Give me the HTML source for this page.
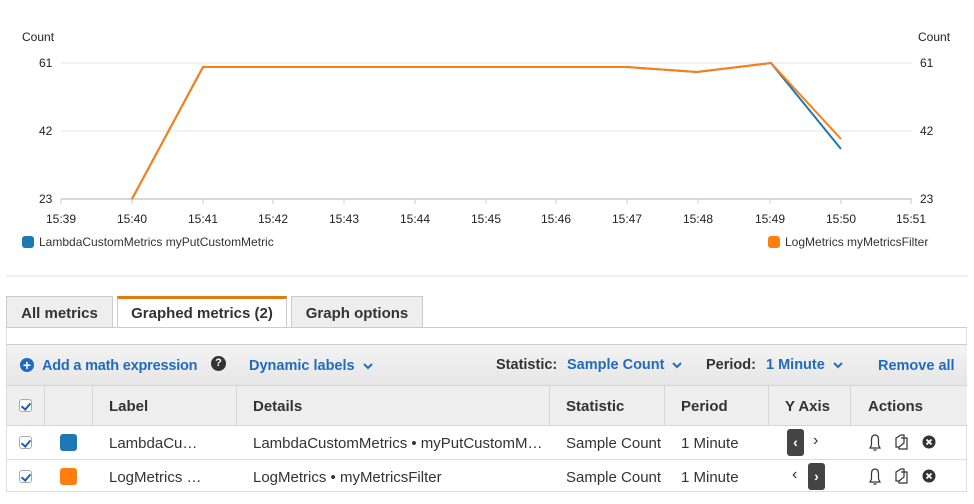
<!DOCTYPE html>
<html><head><style>
*{box-sizing:border-box;margin:0;padding:0}
body{width:974px;height:504px;background:#fff;font-family:"Liberation Sans",Arial,sans-serif;position:relative;overflow:hidden;color:#333}
.abs{position:absolute}
.tab{position:absolute;top:296px;height:31px;border:1px solid #ccc;border-bottom:none;background:#eee;font-weight:bold;font-size:15px;text-align:center;line-height:33px;color:#333}
.blue{color:#1f6bbf;font-weight:bold}
.cb{position:absolute;width:13px;height:13px;border:1px solid #aaa;border-radius:3px;background:#fff}
.cb:after{content:"";position:absolute;left:3px;top:1px;width:4px;height:7px;border:solid #1a5fb4;border-width:0 2px 2px 0;transform:rotate(40deg)}
.th{position:absolute;top:386px;height:40px;line-height:41px;font-weight:bold;font-size:15px;color:#333;border-right:1px solid #d5d5d5}
.td{position:absolute;font-size:15px;color:#333}
.chev{display:inline-block;vertical-align:middle;margin-left:8px}
</style></head><body>
<svg class="abs" style="left:0;top:0" width="974" height="280">
<g font-family="Liberation Sans,Arial,sans-serif" font-size="12" fill="#222">
<text x="22" y="41">Count</text><text x="918" y="41">Count</text>
<text x="39" y="67">61</text><text x="39" y="135">42</text><text x="39" y="203">23</text>
<text x="920" y="67">61</text><text x="920" y="135">42</text><text x="920" y="203">23</text>
</g>
<line x1="61" y1="63" x2="912" y2="63" stroke="#e6e6e6"/>
<line x1="61" y1="131" x2="912" y2="131" stroke="#e6e6e6"/>
<line x1="61" y1="199" x2="912" y2="199" stroke="#ccc" stroke-width="1.5"/>
<g stroke="#ccc">
<line x1="61" y1="199" x2="61" y2="204"/><line x1="132" y1="199" x2="132" y2="204"/><line x1="203" y1="199" x2="203" y2="204"/><line x1="273" y1="199" x2="273" y2="204"/><line x1="344" y1="199" x2="344" y2="204"/><line x1="415" y1="199" x2="415" y2="204"/><line x1="486" y1="199" x2="486" y2="204"/><line x1="556" y1="199" x2="556" y2="204"/><line x1="627" y1="199" x2="627" y2="204"/><line x1="698" y1="199" x2="698" y2="204"/><line x1="770" y1="199" x2="770" y2="204"/><line x1="841" y1="199" x2="841" y2="204"/><line x1="911" y1="199" x2="911" y2="204"/>
</g>
<g font-family="Liberation Sans,Arial,sans-serif" font-size="12" fill="#222" text-anchor="middle">
<text x="61" y="223">15:39</text><text x="132" y="223">15:40</text><text x="203" y="223">15:41</text><text x="273" y="223">15:42</text><text x="344" y="223">15:43</text><text x="415" y="223">15:44</text><text x="486" y="223">15:45</text><text x="556" y="223">15:46</text><text x="627" y="223">15:47</text><text x="698" y="223">15:48</text><text x="770" y="223">15:49</text><text x="841" y="223">15:50</text><text x="911" y="223">15:51</text>
</g>
<polyline points="132,199 203,67 627,67 697,72 771,63 841,149" fill="none" stroke="#1f77b4" stroke-width="2"/>
<polyline points="132,199 203,67 627,67 697,72 771,63 841,139" fill="none" stroke="#ff7f0e" stroke-width="2"/>
<rect x="22" y="236" width="12" height="12" rx="3" fill="#1f77b4"/>
<text x="39" y="246" font-family="Liberation Sans,Arial,sans-serif" font-size="12" fill="#333">LambdaCustomMetrics myPutCustomMetric</text>
<rect x="768" y="236" width="12" height="12" rx="3" fill="#ff7f0e"/>
<text x="785" y="246" font-family="Liberation Sans,Arial,sans-serif" font-size="12" fill="#333">LogMetrics myMetricsFilter</text>
<line x1="6" y1="276" x2="968" y2="276" stroke="#ddd"/>
<text x="481" y="287" font-size="8" fill="#999">•••</text>
</svg>
<div class="tab" style="left:6px;width:107px">All metrics</div>
<div class="tab" style="left:117px;width:170px;background:#fff;border-top:3px solid #e07b0c;height:32px;line-height:30px">Graphed metrics (2)</div>
<div class="tab" style="left:291px;width:132px">Graph options</div>
<div class="abs" style="left:6px;top:327px;width:961px;height:165px;border:1px solid #ddd;border-top:1px solid #ccc"></div>
<div class="abs" style="left:287px;top:327px;width:680px;height:1px;background:#ccc"></div>
<div class="abs" style="left:7px;top:344px;width:960px;height:42px;background:linear-gradient(#f3f3f3,#e6e6e6);border-top:1px solid #ccc;border-bottom:1px solid #d5d5d5"></div>
<div class="abs" style="left:20px;top:358px;width:14px;height:14px;border-radius:50%;background:#1f6bbf;color:#fff;font-size:14px;line-height:14px;text-align:center;font-weight:bold">+</div>
<div class="abs blue" style="left:42px;top:358px;font-size:14.5px;letter-spacing:-0.2px">Add a math expression</div>
<div class="abs" style="left:211px;top:356px;width:15px;height:15px;border-radius:50%;background:#333;color:#fff;font-size:11px;line-height:15px;text-align:center;font-weight:bold">?</div>
<div class="abs blue" style="left:249px;top:358px;font-size:14.5px">Dynamic labels<svg class="chev" width="10" height="7"><path d="M1 1 L5 5 L9 1" fill="none" stroke="#1f6bbf" stroke-width="2"/></svg></div>
<div class="abs" style="left:496px;top:357px;font-size:14.5px;font-weight:bold;color:#333">Statistic:</div>
<div class="abs blue" style="left:567px;top:357px;font-size:14.5px">Sample Count<svg class="chev" width="10" height="7"><path d="M1 1 L5 5 L9 1" fill="none" stroke="#1f6bbf" stroke-width="2"/></svg></div>
<div class="abs" style="left:706px;top:357px;font-size:14.5px;font-weight:bold;color:#333">Period:</div>
<div class="abs blue" style="left:766px;top:357px;font-size:14.5px">1 Minute<svg class="chev" width="10" height="7"><path d="M1 1 L5 5 L9 1" fill="none" stroke="#1f6bbf" stroke-width="2"/></svg></div>
<div class="abs blue" style="left:878px;top:358px;font-size:14.5px">Remove all</div>
<div class="abs" style="left:7px;top:386px;width:960px;height:40px;background:#eee;border-bottom:1px solid #d5d5d5"></div>
<div class="th" style="left:7px;width:38px"></div>
<div class="th" style="left:45px;width:48px"></div>
<div class="th" style="left:93px;width:144px;padding-left:16px">Label</div>
<div class="th" style="left:237px;width:313px;padding-left:16px">Details</div>
<div class="th" style="left:550px;width:115px;padding-left:16px">Statistic</div>
<div class="th" style="left:665px;width:104px;padding-left:16px">Period</div>
<div class="th" style="left:769px;width:82px;padding-left:16px">Y Axis</div>
<div class="th" style="left:851px;width:116px;padding-left:17px;border:none">Actions</div>
<div class="cb" style="left:19px;top:399px"></div>
<div class="abs" style="left:7px;top:459px;width:960px;height:1px;background:#ddd"></div>
<div class="abs" style="left:7px;top:491px;width:960px;height:1px;background:#ddd"></div>
<div class="cb" style="left:19px;top:436px"></div>
<div class="cb" style="left:19px;top:470px"></div>
<div class="abs" style="left:60px;top:434px;width:17px;height:17px;border-radius:3px;background:#1f77b4"></div>
<div class="abs" style="left:60px;top:468px;width:17px;height:17px;border-radius:3px;background:#ff7f0e"></div>
<div class="td" style="left:109px;top:435px">LambdaCu…</div>
<div class="td" style="left:109px;top:469px">LogMetrics …</div>
<div class="td" style="left:253px;top:435px">LambdaCustomMetrics • myPutCustomM…</div>
<div class="td" style="left:253px;top:469px">LogMetrics • myMetricsFilter</div>
<div class="td" style="left:566px;top:435px">Sample Count</div>
<div class="td" style="left:566px;top:469px">Sample Count</div>
<div class="td" style="left:681px;top:435px">1 Minute</div>
<div class="td" style="left:681px;top:469px">1 Minute</div>
<div class="abs" style="left:787px;top:429px;width:17px;height:27px;background:#444;border-radius:3px;color:#fff;font-size:14px;line-height:27px;text-align:center;font-weight:bold">‹</div>
<div class="td" style="left:813px;top:432px;font-size:16px">›</div>
<div class="td" style="left:792px;top:466px;font-size:16px">‹</div>
<div class="abs" style="left:808px;top:463px;width:17px;height:27px;background:#444;border-radius:3px;color:#fff;font-size:14px;line-height:27px;text-align:center;font-weight:bold">›</div>
<svg class="abs" style="left:866px;top:432px" width="80" height="60">
<g fill="none" stroke="#333" stroke-width="1.2">
<path d="M4 16 L14 16 L12.5 13 L12.5 8 Q12.5 3 9 3 Q5.5 3 5.5 8 L5.5 13 Z M7.5 17.5 Q9 19 10.5 17.5"/>
<path d="M4 50 L14 50 L12.5 47 L12.5 42 Q12.5 37 9 37 Q5.5 37 5.5 42 L5.5 47 Z M7.5 51.5 Q9 53 10.5 51.5"/>
<path d="M30 6 L35 3 L38 3 L38 11 L33 15 L30 15 Z M35 6 L41 6 L41 17 L33 17 L33 15"/>
<path d="M30 40 L35 37 L38 37 L38 45 L33 49 L30 49 Z M35 40 L41 40 L41 51 L33 51 L33 49"/>
</g>
<circle cx="63" cy="10" r="6.5" fill="#333"/><circle cx="63" cy="44" r="6.5" fill="#333"/>
<path d="M60.5 7.5 L65.5 12.5 M65.5 7.5 L60.5 12.5 M60.5 41.5 L65.5 46.5 M65.5 41.5 L60.5 46.5" stroke="#fff" stroke-width="1.8"/>
</svg>
</body></html>
